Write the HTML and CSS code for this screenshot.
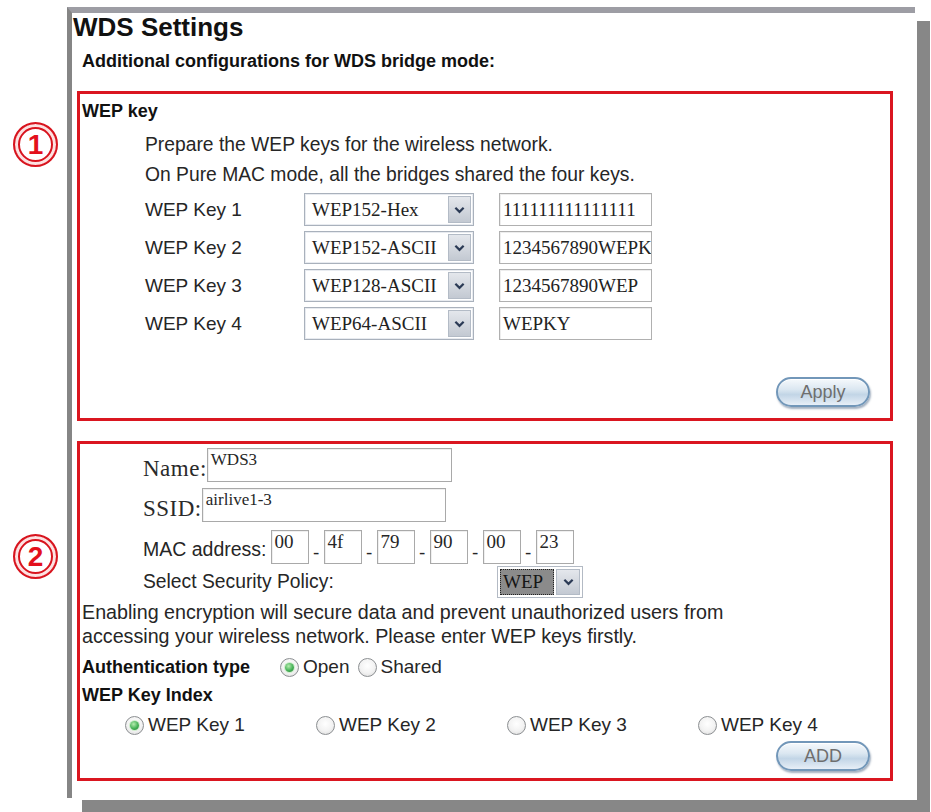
FILE: index.html
```html
<!DOCTYPE html>
<html>
<head>
<meta charset="utf-8">
<title>WDS Settings</title>
<link rel="stylesheet" href="styles.css">
</head>
<body>
<div class="panel">
  <h1 class="title">WDS Settings</h1>
  <p class="subtitle">Additional configurations for WDS bridge mode:</p>

  <section class="redbox box1">
    <span class="marker">1</span>
    <h2 class="boxhead">WEP key</h2>
    <div class="indent">
      <p class="line first">Prepare the WEP keys for the wireless network.</p>
      <p class="line">On Pure MAC mode, all the bridges shared the four keys.</p>
      <div class="keyrows">
        <div class="keyrow">
          <span class="klabel">WEP Key 1</span>
          <div class="select"><span class="sel-val">WEP152-Hex</span><span class="sel-btn"><svg viewBox="0 0 12 8" width="11" height="8"><path d="M1.5 1.5 L6 6 L10.5 1.5" fill="none" stroke="#2b3a55" stroke-width="2.4"/></svg></span></div>
          <div class="tinput">111111111111111</div>
        </div>
        <div class="keyrow">
          <span class="klabel">WEP Key 2</span>
          <div class="select"><span class="sel-val">WEP152-ASCII</span><span class="sel-btn"><svg viewBox="0 0 12 8" width="11" height="8"><path d="M1.5 1.5 L6 6 L10.5 1.5" fill="none" stroke="#2b3a55" stroke-width="2.4"/></svg></span></div>
          <div class="tinput">1234567890WEPKY</div>
        </div>
        <div class="keyrow">
          <span class="klabel">WEP Key 3</span>
          <div class="select"><span class="sel-val">WEP128-ASCII</span><span class="sel-btn"><svg viewBox="0 0 12 8" width="11" height="8"><path d="M1.5 1.5 L6 6 L10.5 1.5" fill="none" stroke="#2b3a55" stroke-width="2.4"/></svg></span></div>
          <div class="tinput">1234567890WEP</div>
        </div>
        <div class="keyrow">
          <span class="klabel">WEP Key 4</span>
          <div class="select"><span class="sel-val">WEP64-ASCII</span><span class="sel-btn"><svg viewBox="0 0 12 8" width="11" height="8"><path d="M1.5 1.5 L6 6 L10.5 1.5" fill="none" stroke="#2b3a55" stroke-width="2.4"/></svg></span></div>
          <div class="tinput">WEPKY</div>
        </div>
      </div>
    </div>
    <div class="btnrow apply-row"><span class="pill">Apply</span></div>
  </section>

  <section class="redbox box2">
    <span class="marker">2</span>
    <div class="frow namerow">
      <span class="slabel name-l">Name:</span>
      <div class="fld name-f">WDS3</div>
    </div>
    <div class="frow ssidrow">
      <span class="slabel ssid-l">SSID:</span>
      <div class="fld ssid-f">airlive1-3</div>
    </div>
    <div class="frow macrow">
      <span class="maclabel">MAC address:</span>
      <div class="fld mac">00</div><span class="dash">-</span>
      <div class="fld mac">4f</div><span class="dash">-</span>
      <div class="fld mac">79</div><span class="dash">-</span>
      <div class="fld mac">90</div><span class="dash">-</span>
      <div class="fld mac">00</div><span class="dash">-</span>
      <div class="fld mac">23</div>
    </div>
    <div class="frow secrow">
      <span class="seclabel">Select Security Policy:</span>
      <div class="sec"><span class="sec-val">WEP</span><span class="sec-btn"><svg viewBox="0 0 12 8" width="11" height="8"><path d="M1.5 1.5 L6 6 L10.5 1.5" fill="none" stroke="#2b3a55" stroke-width="2.4"/></svg></span></div>
    </div>
    <p class="note">Enabling encryption will secure data and prevent unauthorized users from<br>accessing your wireless network. Please enter WEP keys firstly.</p>
    <div class="authrow">
      <span class="blabel auth-l">Authentication type</span>
      <span class="radio on"></span><span class="rtext open-t">Open</span>
      <span class="radio"></span><span class="rtext">Shared</span>
    </div>
    <div class="blabel idxhead">WEP Key Index</div>
    <div class="idxrow">
      <div class="ropt"><span class="radio on"></span><span class="rtext">WEP Key 1</span></div>
      <div class="ropt"><span class="radio"></span><span class="rtext">WEP Key 2</span></div>
      <div class="ropt"><span class="radio"></span><span class="rtext">WEP Key 3</span></div>
      <div class="ropt"><span class="radio"></span><span class="rtext">WEP Key 4</span></div>
    </div>
    <div class="btnrow add-row"><span class="pill">ADD</span></div>
  </section>
</div>
</body>
</html>
```

FILE: styles.css
```css
* { box-sizing: border-box; }
html, body { margin: 0; padding: 0; background: #fff; }
body {
  width: 931px;
  height: 812px;
  overflow: hidden;
  font-family: "Liberation Sans", Arial, sans-serif;
  color: #262626;
}

.panel {
  margin: 7px 0 0 67px;
  width: 848px;
  height: 791px;
  border-top: 6px solid #9d9da4;
  border-left: 5px solid #858585;
  background: #fff;
  box-shadow: 2px 2px 0 #fff, 15px 14px 0 #878787;
}

.title {
  margin: 0 0 0 1px;
  font: bold 26px/28px "Liberation Sans", Arial, sans-serif;
  color: #111;
}
.subtitle {
  margin: 9px 0 0 10px;
  font: bold 18px/22px "Liberation Sans", Arial, sans-serif;
  color: #111;
}

.redbox {
  position: relative;
  margin-left: 5px;
  width: 816px;
  border: 3px solid #da1620;
  padding: 0 20px 0 2px;
}
.box1 { margin-top: 19px; padding-top: 6px; padding-bottom: 11px; }
.box2 { margin-top: 20px; padding-top: 4px; padding-bottom: 7px; }

.marker {
  position: absolute;
  left: -67px;
  width: 45px;
  height: 45px;
  border-radius: 50%;
  border: 2px solid #d8141e;
  box-shadow: inset 0 0 0 3px #fde2e2, inset 0 0 0 5px #d8141e;
  display: flex;
  align-items: center;
  justify-content: center;
  font: bold 28px/1 "Liberation Sans", Arial, sans-serif;
  color: #e3101c;
  background: #fff;
}
.box1 .marker { top: 28px; }
.box2 .marker { top: 90px; }

.boxhead {
  margin: 0;
  font: bold 18px/22px "Liberation Sans", Arial, sans-serif;
  color: #111;
}

.indent { padding-left: 63px; }
.line {
  margin: 0;
  font-size: 19.3px;
  line-height: 30px;
}
.line.first { margin-top: 8px; }

.keyrows {
  margin-top: 3px;
  display: flex;
  flex-direction: column;
  gap: 5px;
}
.keyrow {
  display: flex;
  align-items: center;
  height: 33px;
}
.klabel { width: 159px; font-size: 19px; }

.select {
  display: flex;
  width: 170px;
  height: 33px;
  border: 1px solid #a9b1bc;
  box-shadow: inset 0 0 0 1px #e8ebf0;
  background: #fff;
  padding: 2px;
}
.sel-val {
  flex: 1;
  padding-left: 5px;
  font: 19px/27px "Liberation Serif", "Times New Roman", serif;
  color: #222;
  white-space: nowrap;
  overflow: hidden;
}
.sel-btn {
  width: 23px;
  display: flex;
  align-items: center;
  justify-content: center;
  background: linear-gradient(#e4e7ec, #c3c9d2);
  border: 1px solid #b3bbc6;
}

.tinput {
  margin-left: 25px;
  width: 153px;
  height: 33px;
  border: 1px solid #b0b0b0;
  box-shadow: inset 1px 1px 0 #ededed;
  padding: 0 3px;
  font: 19px/31px "Liberation Serif", "Times New Roman", serif;
  color: #222;
  white-space: nowrap;
  overflow: hidden;
}

.btnrow { display: flex; justify-content: flex-end; }
.apply-row { margin-top: 37px; }
.add-row { margin-top: 4px; }
.pill {
  width: 94px;
  height: 30px;
  border-radius: 15px;
  border: 2px solid #7297b9;
  background: linear-gradient(#f5f9fc 0%, #dbe7f1 40%, #c2d5e6 60%, #e7eff7 100%);
  box-shadow: 1px 2px 2px rgba(50, 80, 115, 0.45), inset 0 1px 0 #fff;
  display: flex;
  align-items: center;
  justify-content: center;
  font: 18px/1 "Liberation Sans", Arial, sans-serif;
  color: #6e6e6e;
}

/* box 2 */
.frow {
  display: flex;
  align-items: center;
  padding-left: 61px;
}
.namerow { height: 34px; }
.ssidrow { margin-top: 6px; height: 34px; }
.macrow { margin-top: 8px; height: 34px; }
.secrow { margin-top: 2px; height: 32px; }

.slabel {
  font: 23px/23px "Liberation Serif", "Times New Roman", serif;
  letter-spacing: 0.5px;
  color: #2a2a2a;
  padding-top: 6px;
}
.fld {
  height: 34px;
  border: 1px solid #a9a9a9;
  box-shadow: inset 1px 1px 0 #efefef;
  padding: 2px 3px 0;
  font: 17px/17px "Liberation Serif", "Times New Roman", serif;
  color: #262626;
  white-space: nowrap;
}
.name-f { width: 245px; }
.ssid-f { width: 244px; }

.maclabel { font-size: 19.5px; margin-right: 4px; padding-top: 4px; }
.mac {
  width: 38px;
  padding: 1px 3px 0;
  font: 19px/19px "Liberation Serif", "Times New Roman", serif;
}
.dash {
  width: 15px;
  text-align: center;
  font-size: 19px;
  padding-top: 12px;
}

.seclabel { width: 354px; font-size: 19.3px; }
.sec {
  display: flex;
  width: 86px;
  height: 32px;
  border: 1px solid #b3bac4;
  background: #fff;
  padding: 2px;
}
.sec-val {
  width: 54px;
  background: #8b8b8b;
  outline: 1px dotted #222;
  outline-offset: -1px;
  padding-left: 3px;
  font: 19px/26px "Liberation Serif", "Times New Roman", serif;
  color: #151515;
}
.sec-btn {
  flex: 1;
  margin-left: 2px;
  display: flex;
  align-items: center;
  justify-content: center;
  background: linear-gradient(#e4e7ec, #c3c9d2);
  border: 1px solid #b3bbc6;
}

.note {
  margin: 2px 0 0;
  font-size: 19.7px;
  line-height: 24px;
}

.blabel {
  font: bold 18px/24px "Liberation Sans", Arial, sans-serif;
  color: #111;
}
.authrow {
  margin-top: 7px;
  height: 24px;
  display: flex;
  align-items: center;
}
.auth-l { margin-right: 30px; }
.rtext { font-size: 19px; line-height: 24px; margin-left: 4px; }
.open-t { margin-right: 8px; }

.idxhead { margin-top: 4px; }
.idxrow {
  margin-top: 6px;
  height: 24px;
  padding-left: 43px;
  display: grid;
  grid-template-columns: 191px 191px 191px 191px;
}
.ropt { display: flex; align-items: center; }

.radio {
  width: 19px;
  height: 19px;
  flex: none;
  border-radius: 50%;
  border: 1.5px solid #8c8f92;
  background: radial-gradient(circle at 50% 40%, #ffffff 0, #f2f2f2 55%, #d6d6d6 100%);
  display: inline-flex;
  align-items: center;
  justify-content: center;
}
.radio.on::after {
  content: "";
  width: 9px;
  height: 9px;
  border-radius: 50%;
  background: radial-gradient(circle at 40% 35%, #b5ecae 0, #46b257 55%, #237f32 100%);
  box-shadow: 0 0 0 1px #cfeccc;
}
```
